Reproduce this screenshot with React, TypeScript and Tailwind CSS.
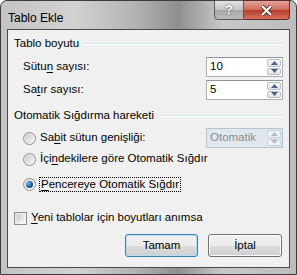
import React from 'react';

const font = "font-['Liberation_Sans',Arial,sans-serif]";

const Spin: React.FC<{ value: string; disabled?: boolean }> = ({ value, disabled }) => (
  <div
    className={`w-[77px] h-[20px] flex border ${
      disabled
        ? 'border-[#b8c3d2] bg-[#e1e7ef] text-[#8d8d8d]'
        : 'border-[#abadb3] border-t-[#8e949c] bg-white text-black'
    }`}
  >
    <div className="flex-1 flex items-center pl-[3px] text-[11.5px] leading-none">{value}</div>
    <div className="w-[16px] flex flex-col gap-[1px] p-[1px]">
      {[0, 1].map((i) => (
        <div
          key={i}
          className={`flex-1 flex items-center justify-center rounded-[2px] border ${
            disabled
              ? 'border-[#c9d1dc] bg-[#eef1f5]'
              : 'border-[#b9bdc4] bg-[linear-gradient(#f7f7f7,#e2e4e8)]'
          }`}
        >
          <svg width="7" height="4" viewBox="0 0 7 4">
            <path
              d={i === 0 ? 'M0 4 L3.5 0 L7 4 Z' : 'M0 0 L3.5 4 L7 0 Z'}
              fill={disabled ? '#b7bcc4' : '#4d6185'}
            />
          </svg>
        </div>
      ))}
    </div>
  </div>
);

const Radio: React.FC<{ checked?: boolean }> = ({ checked }) => (
  <div className="w-[13px] h-[13px] rounded-full border border-[#8e8f8f] bg-[linear-gradient(135deg,#dcdcdc,#fbfbfb)] flex items-center justify-center shrink-0">
    {checked ? (
      <div className="w-[7px] h-[7px] rounded-full bg-[radial-gradient(circle_at_35%_35%,#7bb8ea,#1d5a8e_55%,#0f3359)]" />
    ) : (
      <div className="w-[9px] h-[9px] rounded-full bg-[linear-gradient(135deg,#cbcbcb,#f4f4f4)]" />
    )}
  </div>
);

const Header: React.FC<{ text: string }> = ({ text }) => (
  <div className="h-[16px] flex items-center gap-[5px]">
    <span>{text}</span>
    <div className="flex-1 h-px bg-[#d5dfe5] border-b border-white box-content" />
  </div>
);

export default function App() {
  return (
    <div
      className={`${font} text-[11.5px] text-black w-[297px] h-[275px] flex flex-col rounded-t-[7px] border border-[#3c3c3c] bg-[linear-gradient(90deg,#c4c4c4_0%,#d2d2d2_25%,#b4b4b4_45%,#8f8f8f_60%,#c8c8c8_75%,#bdbdbd_100%)]`}
    >
      {/* title bar */}
      <div className="h-[28px] flex items-start shrink-0">
        <div className="flex-1 pl-[7px] pt-[8px] text-[12px]">Tablo Ekle</div>
        <div className="flex mr-[6px] -mt-px">
          <div className="w-[30px] h-[20px] border border-[#585858] rounded-bl-[4px] bg-[linear-gradient(#e2e2e2,#c4c4c4_50%,#a7a7a7_51%,#bcbcbc)] flex items-center justify-center text-white font-bold text-[12px] [text-shadow:0_0_2px_#333]">
            ?
          </div>
          <div className="w-[46px] h-[20px] border border-l-0 border-[#5a2a2a] rounded-br-[4px] bg-[linear-gradient(#e6a49a,#cf6a5b_50%,#b63d2c_51%,#d6705c)] flex items-center justify-center">
            <svg width="13" height="11" viewBox="0 0 13 11">
              <path d="M2 1 L11 10 M11 1 L2 10" stroke="#3a1a1a" strokeWidth="3.6" />
              <path d="M2 1 L11 10 M11 1 L2 10" stroke="#fff" strokeWidth="2.2" />
            </svg>
          </div>
        </div>
      </div>

      {/* client */}
      <div className="mx-[6px] mb-[6px] flex-1 border border-[#4a4a4a] bg-[#f0f0f0] flex flex-col pt-[6px] pl-[6px] pr-[6px]">
        <Header text="Tablo boyutu" />
        <div className="mt-[5px] h-[20px] flex items-center justify-between pl-[9px]">
          <span>
            Sütu<u className="underline-offset-2">n</u> sayısı:
          </span>
          <Spin value="10" />
        </div>
        <div className="mt-[3px] h-[20px] flex items-center justify-between pl-[9px]">
          <span>
            Sa<u className="underline-offset-2">t</u>ır sayısı:
          </span>
          <Spin value="5" />
        </div>

        <div className="mt-[8px]">
          <Header text="Otomatik Sığdırma hareketi" />
        </div>
        <div className="mt-[4px] h-[20px] flex items-center justify-between pl-[9px]">
          <div className="flex items-center gap-[4px]">
            <Radio />
            <span>
              Sa<u className="underline-offset-2">b</u>it sütun genişliği:
            </span>
          </div>
          <Spin value="Otomatik" disabled />
        </div>
        <div className="mt-[3px] h-[16px] flex items-center gap-[4px] pl-[9px]">
          <Radio />
          <span>
            İçi<u className="underline-offset-2">n</u>dekilere göre Otomatik Sığdır
          </span>
        </div>
        <div className="mt-[9px] h-[16px] flex items-center gap-[3px] pl-[9px]">
          <Radio checked />
          <span className="border border-dotted border-black px-px leading-[13px]">
            <u className="underline-offset-2">P</u>encereye Otomatik Sığdır
          </span>
        </div>

        <div className="mt-[18px] h-[16px] flex items-center gap-[4px]">
          <div className="w-[13px] h-[13px] border border-[#8e8f8f] bg-[linear-gradient(135deg,#dcdcdc,#fbfbfb)] p-[2px] shrink-0">
            <div className="w-full h-full bg-[linear-gradient(135deg,#cbcbcb,#f4f4f4)]" />
          </div>
          <span>
            <u className="underline-offset-2">Y</u>eni tablolar için boyutları anımsa
          </span>
        </div>

        <div className="mt-[8px] flex justify-end gap-[10px] pr-[1px]">
          <button className="w-[73px] h-[23px] rounded-[3px] border border-[#3c7fb1] bg-[linear-gradient(#f2f2f2,#ebebeb_50%,#dddddd_51%,#cfcfcf)] shadow-[inset_0_0_0_1px_#b4e0f7]">
            Tamam
          </button>
          <button className="w-[74px] h-[23px] rounded-[3px] border border-[#707070] bg-[linear-gradient(#f2f2f2,#ebebeb_50%,#dddddd_51%,#cfcfcf)] shadow-[inset_0_0_0_1px_#fcfcfc]">
            İptal
          </button>
        </div>
      </div>
    </div>
  );
}
